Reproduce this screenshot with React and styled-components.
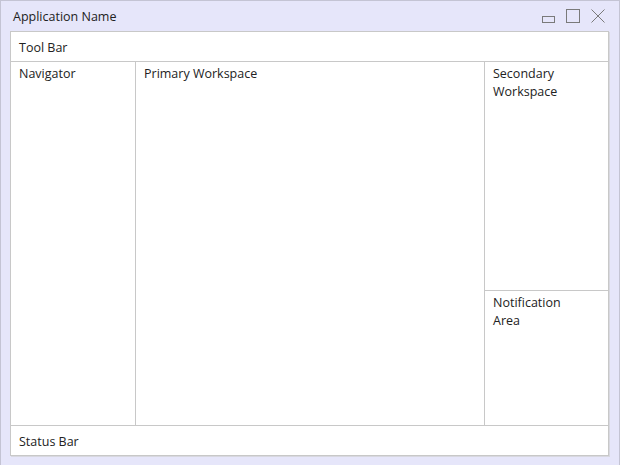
import React from "react";
import styled, { createGlobalStyle } from "styled-components";

const Global = createGlobalStyle`
  html, body {
    margin: 0;
    padding: 0;
    background: #ffffff;
  }
  body {
    font-family: "Open Sans", "Noto Sans", sans-serif;
  }
`;

const Window = styled.div`
  box-sizing: border-box;
  width: 620px;
  height: 465px;
  background: #e6e6fa;
  border: 1px solid #c4c4d4;
  border-bottom: none;
  display: flex;
  flex-direction: column;
  padding: 0 10px 9px 9px;
`;

const TitleBar = styled.div`
  height: 30px;
  display: flex;
  align-items: center;
  justify-content: space-between;
  padding-left: 3px;
  font-size: 12.5px;
  color: #222;
`;

const Controls = styled.div`
  display: flex;
  align-items: center;
  gap: 11px;
  padding-right: 4px;
  color: #7a7a7a;
`;

const Panel = styled.div`
  flex: 1;
  display: grid;
  grid-template-columns: 124px 349px 1fr;
  grid-template-rows: 29px 229px 1fr 30px;
  grid-template-areas:
    "tool tool tool"
    "nav main second"
    "nav main notify"
    "status status status";
  background: #fff;
  border: 1px solid #c8c8c8;
  box-shadow: 1px 1px 0 #d8d8e0;
`;

const Cell = styled.div`
  grid-area: ${(p) => p.area};
  box-sizing: border-box;
  font-size: 12.5px;
  color: #222;
  line-height: 18px;
  padding: ${(p) => (p.bar ? "7px 8px 0" : "3px 8px")};
  border-top: ${(p) => (p.top ? "1px solid #c8c8c8" : "none")};
  border-left: ${(p) => (p.left ? "1px solid #c8c8c8" : "none")};
`;

const Label = styled.div`
  width: 80px;
`;

const Minimize = () => (
  <svg width="13" height="14" viewBox="0 0 13 14">
    <rect x="0.5" y="7.5" width="12" height="6" fill="none" stroke="currentColor" />
  </svg>
);

const Maximize = () => (
  <svg width="14" height="14" viewBox="0 0 14 14">
    <rect x="0.5" y="0.5" width="13" height="13" fill="none" stroke="currentColor" />
  </svg>
);

const Close = () => (
  <svg width="14" height="14" viewBox="0 0 14 14">
    <path d="M0.5 0.5 L13.5 13.5 M13.5 0.5 L0.5 13.5" stroke="currentColor" fill="none" />
  </svg>
);

export default function App() {
  return (
    <>
      <Global />
      <Window>
        <TitleBar>
          <span>Application Name</span>
          <Controls>
            <Minimize />
            <Maximize />
            <Close />
          </Controls>
        </TitleBar>
        <Panel>
          <Cell area="tool" bar>Tool Bar</Cell>
          <Cell area="nav" top>Navigator</Cell>
          <Cell area="main" top left>Primary Workspace</Cell>
          <Cell area="second" top left>
            <Label>Secondary Workspace</Label>
          </Cell>
          <Cell area="notify" top left>
            <Label>Notification Area</Label>
          </Cell>
          <Cell area="status" top bar>Status Bar</Cell>
        </Panel>
      </Window>
    </>
  );
}
